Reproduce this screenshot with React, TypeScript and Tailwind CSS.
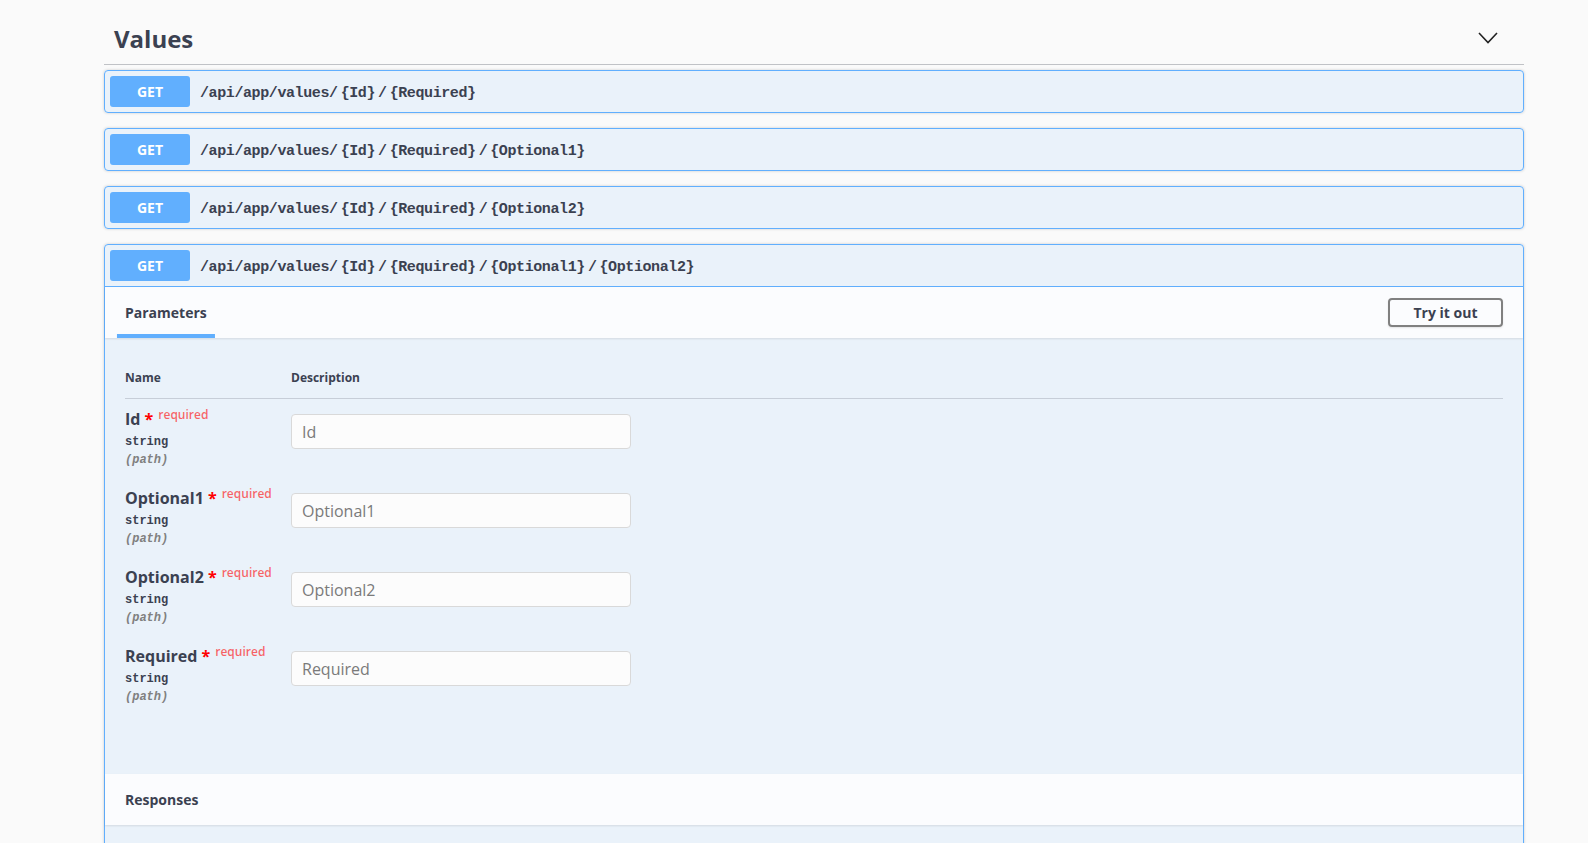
import React from "react";

type Op = { path: string[]; open?: boolean };

const ops: Op[] = [
  { path: ["/api/app/values/", "{Id}", "/", "{Required}"] },
  { path: ["/api/app/values/", "{Id}", "/", "{Required}", "/", "{Optional1}"] },
  { path: ["/api/app/values/", "{Id}", "/", "{Required}", "/", "{Optional2}"] },
  {
    path: ["/api/app/values/", "{Id}", "/", "{Required}", "/", "{Optional1}", "/", "{Optional2}"],
    open: true,
  },
];

const params = ["Id", "Optional1", "Optional2", "Required"];

const mono = "font-['Liberation_Mono',monospace]";

function Summary({ path, open }: Op) {
  return (
    <div className={`flex items-center p-[5px] ${open ? "border-b border-[#61affe]" : ""}`}>
      <span className="flex h-[31px] w-[80px] items-center justify-center rounded-[3px] bg-[#61affe] text-[14px] font-bold text-white">
        GET
      </span>
      <span className={`mt-[6px] flex px-[10px] text-[15px] font-bold tracking-[-0.4px] text-[#3b4151] ${mono}`}>
        {path.map((p, i) => (
          <span key={i} className={i ? "ml-[3px]" : ""}>
            {p}
          </span>
        ))}
      </span>
    </div>
  );
}

function ParamRow({ name }: { name: string }) {
  return (
    <div className="flex h-[79px] pt-[10px]">
      <div className="w-[166px]">
        <div className="text-[16px] font-bold leading-[20px]">
          {name}
          <span className="text-[#ff0000]">&nbsp;*</span>
          <span className="relative top-[-6px] pl-[5px] text-[12px] font-semibold text-[rgba(255,0,0,0.6)]">
            required
          </span>
        </div>
        <div className={`mt-[3px] text-[12px] font-bold leading-[16px] ${mono}`}>string</div>
        <div className={`mt-[2px] text-[12px] font-bold italic leading-[16px] text-[#808080] ${mono}`}>
          (path)
        </div>
      </div>
      <div>
        <input
          className="mt-[5px] h-[35px] w-[340px] rounded-[4px] border border-[#d9d9d9] bg-[#fcfcfc] px-[10px] text-[16px] text-[#3b4151] outline-none placeholder:text-[#7a7a7a]"
          placeholder={name}
        />
      </div>
    </div>
  );
}

function OpenBody() {
  return (
    <>
      <div className="relative flex h-[51px] items-center justify-between bg-white/80 px-[20px] shadow-[0_1px_2px_rgba(0,0,0,0.1)]">
        <div className="relative flex h-full items-center">
          <span className="text-[14px] font-bold">Parameters</span>
          <div className="absolute bottom-0 left-1/2 h-[4px] w-[120%] -translate-x-1/2 bg-[#61affe]" />
        </div>
        <button className="h-[29px] w-[115px] rounded-[4px] border-2 border-[#808080] bg-transparent text-[14px] font-bold text-[#3b4151] shadow-[0_1px_2px_rgba(0,0,0,0.1)]">
          Try it out
        </button>
      </div>

      <div className="px-[20px] pb-[59px] pt-[20px]">
        <div className="flex border-b border-[rgba(59,65,81,0.2)] py-[12px] text-[12px] font-bold leading-[16px]">
          <div className="w-[166px]">Name</div>
          <div>Description</div>
        </div>
        {params.map((p) => (
          <ParamRow key={p} name={p} />
        ))}
      </div>

      <div className="relative flex h-[51px] items-center bg-white/80 px-[20px] shadow-[0_1px_2px_rgba(0,0,0,0.1)]">
        <span className="text-[14px] font-bold">Responses</span>
      </div>
      <div className="h-[120px]" />
    </>
  );
}

export default function App() {
  return (
    <div className="h-[843px] overflow-hidden bg-[#fafafa] font-['Open_Sans','Noto_Sans',sans-serif] text-[#3b4151]">
      <div className="ml-[104px] w-[1420px]">
        {/* tag header */}
        <div className="mb-[5px] flex h-[65px] items-end justify-between border-b border-[rgba(59,65,81,0.3)] pb-[9px] pl-[10px] pr-[26px]">
          <h4 className="text-[24px] font-bold leading-[32px]">Values</h4>
          <svg width="20" height="20" viewBox="0 0 20 20" className="mb-[7px]">
            <path d="M1 5 L10 14.5 L19 5" fill="none" stroke="#222" strokeWidth="1.6" />
          </svg>
        </div>

        {ops.map((op, i) => (
          <div
            key={i}
            className="mb-[15px] rounded-[4px] border border-[#61affe] bg-[rgba(97,175,254,0.1)] shadow-[0_0_3px_rgba(0,0,0,0.19)]"
          >
            <Summary path={op.path} open={op.open} />
            {op.open && <OpenBody />}
          </div>
        ))}
      </div>
    </div>
  );
}
